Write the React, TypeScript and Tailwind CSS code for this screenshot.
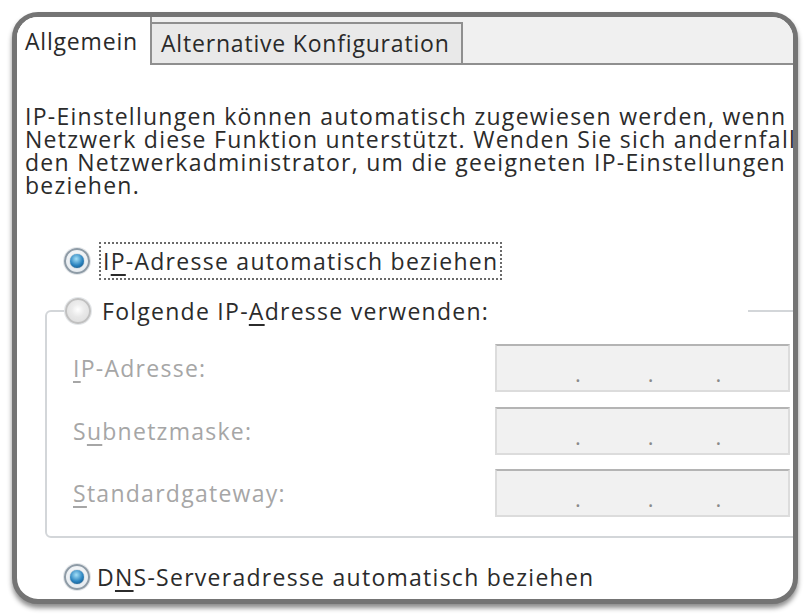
import React from "react";

function Radio({ checked, disabled }: { checked?: boolean; disabled?: boolean }) {
  return (
    <div
      className={
        "w-[26px] h-[26px] rounded-full flex items-center justify-center shrink-0 shadow-[0_0_0_1px_#e3e6e9] " +
        (disabled
          ? "border-2 border-[#c0c0c0] bg-[radial-gradient(circle_at_50%_40%,#f6f6f6,#d9d9d9)]"
          : "border-2 border-[#8e9ba6] bg-[radial-gradient(circle_at_50%_40%,#ffffff,#dde4ea)]")
      }
    >
      {checked && (
        <div className="w-[14px] h-[14px] rounded-full bg-[radial-gradient(circle_at_45%_35%,#a4e0f8,#2a83bf_55%,#0f4670)] shadow-[0_0_1px_#0f4670]" />
      )}
      {disabled && !checked && (
        <div className="w-[13px] h-[13px] rounded-full bg-[radial-gradient(circle_at_45%_35%,#ffffff,#dcdcdc)]" />
      )}
    </div>
  );
}

function IpField() {
  return (
    <div className="w-[295px] h-[48px] bg-[#f1f1f1] border-2 border-[#dcdcdc] border-t-[#b4b4b4] flex items-center text-[22px] leading-none tracking-normal text-[#8a8a8a]">
      <span className="w-[78px]" />
      <span className="relative top-[5px]">.</span>
      <span className="w-[67px]" />
      <span className="relative top-[5px]">.</span>
      <span className="w-[62px]" />
      <span className="relative top-[5px]">.</span>
    </div>
  );
}

export default function App() {
  return (
    <div className="w-[806px] h-[615px] bg-white pt-[12px] pl-[12px] font-['Open_Sans','Noto_Sans',sans-serif]">
      <div className="w-[786px] h-[592px] rounded-[26px] border-[5px] border-[#747474] shadow-[0_4px_5px_rgba(0,0,0,0.45)] overflow-hidden bg-white flex flex-col">
        {/* tab strip */}
        <div className="h-[48px] flex shrink-0 bg-[#f0f0f0]">
          <div className="w-[135px] h-full bg-white border-r-2 border-[#8f8f8f] flex items-center pl-[8px] text-[23px] tracking-[0.035em] text-[#2a2a2a]">
            Allgemein
          </div>
          <div className="w-[311px] h-[43px] self-end bg-[#e9e9e9] border-t-2 border-r-2 border-b-2 border-[#8f8f8f] flex items-center pl-[9px] text-[23px] tracking-[0.035em] text-[#2a2a2a]">
            Alternative Konfiguration
          </div>
          <div className="flex-1 h-full border-b-2 border-[#8f8f8f]" />
        </div>

        {/* panel */}
        <div className="flex-1 flex flex-col pl-[8px] text-[23px] tracking-[0.055em] text-[#2b2b2b] whitespace-nowrap">
          <div className="mt-[40px] leading-[23px]">
            <div>IP-Einstellungen können automatisch zugewiesen werden, wenn das</div>
            <div>Netzwerk diese Funktion unterstützt. Wenden Sie sich andernfalls an</div>
            <div>den Netzwerkadministrator, um die geeigneten IP-Einstellungen zu</div>
            <div>beziehen.</div>
          </div>

          <div className="mt-[45px] h-[38px] flex items-center pl-[39px]">
            <Radio checked />
            <div className="ml-[9px] h-[38px] px-[2px] flex items-center border-2 border-dotted border-[#6a6a6a]">
              I<span className="underline decoration-2 underline-offset-4">P</span>-Adresse automatisch beziehen
            </div>
          </div>

          <fieldset className="mt-[14px] ml-[20px] w-[800px] border-2 border-[#d3d6d9] rounded-[6px] pb-[19px]">
            <legend className="ml-[18px] w-[683px] h-[34px] flex items-center">
              <Radio disabled />
              <span className="ml-[11px]">
                Folgende IP-<span className="underline decoration-2 underline-offset-4">A</span>dresse verwenden:
              </span>
            </legend>
            <div className="flex flex-col pt-[16px] text-[#a6a6a6]">
              <div className="flex items-center h-[48px]">
                <div className="w-[448px] pl-[26px]">
                  <span className="underline decoration-2 underline-offset-4">I</span>P-Adresse:
                </div>
                <IpField />
              </div>
              <div className="flex items-center h-[48px] mt-[15px]">
                <div className="w-[448px] pl-[26px]">
                  S<span className="underline decoration-2 underline-offset-4">u</span>bnetzmaske:
                </div>
                <IpField />
              </div>
              <div className="flex items-center h-[48px] mt-[14px]">
                <div className="w-[448px] pl-[26px]">
                  <span className="underline decoration-2 underline-offset-4">S</span>tandardgateway:
                </div>
                <IpField />
              </div>
            </div>
          </fieldset>

          <div className="mt-[22px] h-[34px] flex items-center pl-[39px]">
            <Radio checked />
            <span className="ml-[7px]">
              D<span className="underline decoration-2 underline-offset-4">N</span>S-Serveradresse automatisch beziehen
            </span>
          </div>
        </div>
      </div>
    </div>
  );
}
